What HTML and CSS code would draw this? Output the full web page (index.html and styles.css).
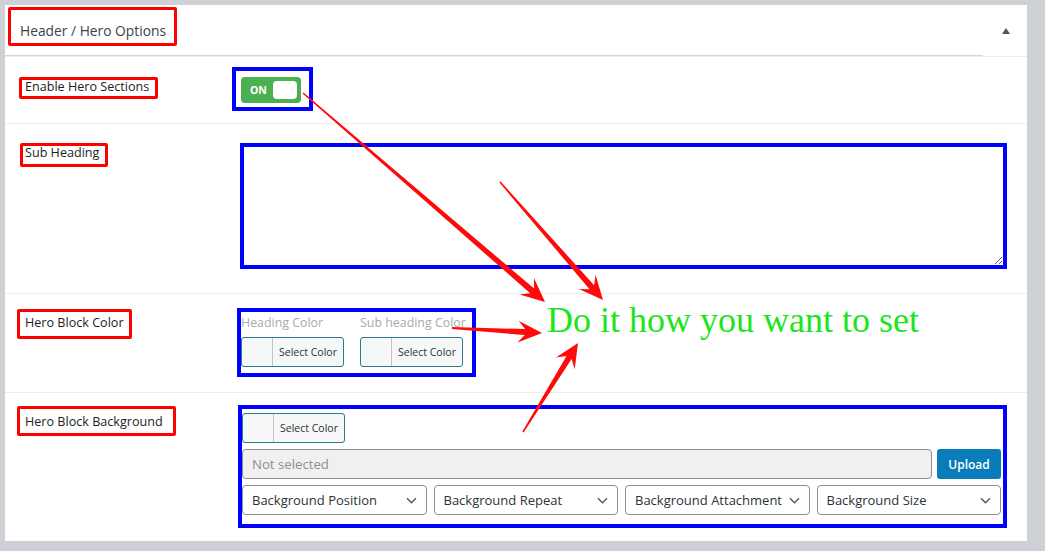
FILE: index.html
```html
<!DOCTYPE html>
<html lang="en">
<head>
    <meta charset="UTF-8">
    <meta name="viewport" content="width=device-width, initial-scale=1.0">
    <title>Header / Hero Options</title>
    <link rel="stylesheet" href="styles.css">
</head>
<body>
    <div class="panel">
        <div class="panel-top">
            <div class="panel-head">
                <h2 class="panel-title">Header / Hero Options</h2>
            </div>
            <div class="head-toggle"><span class="caret-up"></span></div>
        </div>

        <div class="row row-enable">
            <div class="row-label"><span class="mark">Enable Hero Sections</span></div>
            <div class="row-field">
                <div class="box">
                    <span class="switch">
                        <span class="switch-text">ON</span>
                        <span class="switch-knob"></span>
                    </span>
                </div>
            </div>
        </div>

        <div class="row row-sub">
            <div class="row-label"><span class="mark">Sub Heading</span></div>
            <div class="row-field">
                <textarea class="sub-text"></textarea>
            </div>
        </div>

        <div class="row row-color">
            <div class="row-label"><span class="mark">Hero Block Color</span></div>
            <div class="row-field">
                <div class="box">
                    <div class="color-list">
                        <div class="color-item">
                            <div class="color-label">Heading Color</div>
                            <button type="button" class="color-btn"><span class="swatch"></span><span class="color-txt">Select Color</span></button>
                        </div>
                        <div class="color-item">
                            <div class="color-label">Sub heading Color</div>
                            <button type="button" class="color-btn"><span class="swatch"></span><span class="color-txt">Select Color</span></button>
                        </div>
                    </div>
                </div>
            </div>
        </div>

        <div class="row row-bg">
            <div class="row-label"><span class="mark">Hero Block Background</span></div>
            <div class="row-field">
                <div class="box">
                    <button type="button" class="color-btn"><span class="swatch"></span><span class="color-txt">Select Color</span></button>
                    <div class="upload-line">
                        <div class="file-input">Not selected</div>
                        <button type="button" class="upload">Upload</button>
                    </div>
                    <div class="select-line">
                        <div class="select"><span>Background Position</span><svg width="11" height="7" viewBox="0 0 11 7"><path d="M1 1.2l4.5 4.5 4.5-4.5" fill="none" stroke="#50575e" stroke-width="1.4"/></svg></div>
                        <div class="select"><span>Background Repeat</span><svg width="11" height="7" viewBox="0 0 11 7"><path d="M1 1.2l4.5 4.5 4.5-4.5" fill="none" stroke="#50575e" stroke-width="1.4"/></svg></div>
                        <div class="select"><span>Background Attachment</span><svg width="11" height="7" viewBox="0 0 11 7"><path d="M1 1.2l4.5 4.5 4.5-4.5" fill="none" stroke="#50575e" stroke-width="1.4"/></svg></div>
                        <div class="select"><span>Background Size</span><svg width="11" height="7" viewBox="0 0 11 7"><path d="M1 1.2l4.5 4.5 4.5-4.5" fill="none" stroke="#50575e" stroke-width="1.4"/></svg></div>
                    </div>
                </div>
            </div>
        </div>
    </div>

    <!-- annotation arrows -->
    <svg class="arrows" width="1045" height="551" viewBox="0 0 1045 551">
        <polygon points="302.5,93.6 530.2,293.2 519.6,294.6 545,302 534.0,278.0 534.1,288.6 303.5,92.4"/>
        <polygon points="499.4,182.5 589.5,289.2 578.9,289.1 603,300 595.5,274.7 594.1,285.2 500.6,181.5"/>
        <polygon points="451.9,329.0 524.8,335.1 517.4,342.6 542,333 518.6,320.7 525.2,329.1 452.1,327.0"/>
        <polygon points="523.6,432.4 571.6,359.1 574.7,369.2 578,343 556.0,357.6 566.5,355.9 522.4,431.6"/>
    </svg>
    <div class="note">Do it how you want to set</div>
</body>
</html>
```

FILE: styles.css
```css
html,body{
    margin: 0;
    padding: 0;
    background-color: #cdd0d4;
}
body{
    padding: 5px 0 0 5px;
    font-family: "Open Sans", "Noto Sans", sans-serif;
    color: #1d2327;
}
.panel{
    width: 1022px;
    background-color: #fff;
}
.panel-top{
    display: flex;
}
.panel-head{
    flex: 1;
    height: 48px;
    padding: 2px 0 0 3px;
    border-bottom: 1px solid #d4d4d4;
}
.panel-title{
    display: inline-block;
    margin: 0;
    padding: 12px 8px 3px 9px;
    border: 3px solid #f00;
    border-radius: 2px;
    font-size: 13.8px;
    font-weight: 400;
    line-height: 18px;
    color: #3c434a;
}
.head-toggle{
    width: 44px;
    padding: 23px 0 0 19px;
    box-sizing: border-box;
}
.caret-up{
    display: block;
    width: 0;
    height: 0;
    border-left: 4px solid transparent;
    border-right: 4px solid transparent;
    border-bottom: 6px solid #555;
}
.row{
    display: flex;
    border-top: 1px solid #ececec;
}
.row-label{
    width: 215px;
    padding-left: 20px;
    font-size: 12.6px;
    color: #1a1e22;
}
.row-field{
    flex: 1;
}
.mark{
    display: inline-block;
    border: 3px solid #f00;
    border-radius: 2px;
    white-space: nowrap;
}
.box{
    border: 4px solid #00f;
}

/* enable */
.row-enable .row-label{
    padding-top: 20px;
}
.row-enable .mark{
    margin-left: -6px;
    padding: 0 6px 3px 3px;
    line-height: 13px;
}
.row-enable .row-field{
    padding: 10px 0 12px;
}
.row-enable .box{
    display: inline-block;
    margin-left: -8px;
    padding: 6px 8px 4px 5px;
}
.switch{
    display: flex;
    align-items: center;
    justify-content: space-between;
    width: 60px;
    height: 26px;
    box-sizing: border-box;
    padding: 0 4px 0 9px;
    border-radius: 4px;
    background-color: #4caf50;
}
.switch-text{
    font-size: 10.5px;
    font-weight: 700;
    color: #fff;
}
.switch-knob{
    width: 24px;
    height: 18px;
    border-radius: 4px;
    background-color: #fff;
}

/* sub heading */
.row-sub .row-label{
    padding-top: 19px;
}
.row-sub .mark{
    margin-left: -5px;
    padding: 0 6px 4px 2px;
    line-height: 14px;
}
.row-sub .row-field{
    padding: 19px 0 24px;
}
.sub-text{
    display: block;
    width: 767px;
    height: 126px;
    box-sizing: border-box;
    margin: 0;
    border: 4px solid #00f;
    border-radius: 0;
    outline: 0;
}

/* colors */
.row-color .row-label{
    padding-top: 15px;
}
.row-color .mark{
    margin-left: -8px;
    padding: 0 5px 3px 5px;
    line-height: 21px;
}
.row-color .row-field{
    padding: 14px 0 15px;
}
.row-color .box{
    display: inline-block;
    margin-left: -3px;
    padding: 2px 9px 6px 0;
}
.color-list{
    display: flex;
    gap: 16px;
}
.color-item{
    width: 103px;
}
.color-label{
    font-size: 12.4px;
    line-height: 17px;
    color: #a7aaad;
    white-space: nowrap;
    margin-bottom: 6px;
}
.color-btn{
    display: flex;
    width: 103px;
    height: 30px;
    padding: 0;
    border: 1px solid #2b7b8e;
    border-radius: 3px;
    background-color: #f6f7f7;
    overflow: hidden;
    font-family: inherit;
}
.swatch{
    width: 30px;
    height: 100%;
    border-right: 1px solid #c3c4c7;
}
.color-txt{
    flex: 1;
    font-size: 10.5px;
    line-height: 28px;
    color: #2c3338;
    text-align: center;
}

/* background */
.row-bg .row-label{
    padding-top: 13px;
}
.row-bg .mark{
    margin-left: -8px;
    padding: 1px 10px 0 5px;
    line-height: 23px;
}
.row-bg .row-field{
    padding: 12px 0 13px;
}
.row-bg .box{
    margin: 0 20px 0 -2px;
    padding: 4px 2px 9px 0;
}
.upload-line{
    display: flex;
    gap: 5px;
    margin: 6px 0;
}
.file-input{
    flex: 1;
    height: 30px;
    box-sizing: border-box;
    padding-left: 9px;
    border: 1px solid #8c8f94;
    border-radius: 4px;
    background-color: #f0f0f1;
    font-size: 13.2px;
    line-height: 28px;
    color: #8c8f94;
}
.upload{
    width: 64px;
    height: 30px;
    padding: 0;
    border: none;
    border-radius: 3px;
    background-color: #0a7cba;
    font-family: inherit;
    font-size: 12px;
    font-weight: 600;
    color: #fff;
}
.select-line{
    display: flex;
    gap: 7px;
}
.select{
    flex: 1;
    display: flex;
    align-items: center;
    justify-content: space-between;
    height: 30px;
    box-sizing: border-box;
    padding: 0 9px 0 9px;
    border: 1px solid #8c8f94;
    border-radius: 4px;
    font-size: 13px;
    color: #2c3338;
    white-space: nowrap;
}

/* annotations */
.arrows{
    position: absolute;
    top: 0;
    left: 0;
    fill: #ff0a0a;
    pointer-events: none;
}
.note{
    position: absolute;
    top: 302px;
    left: 547px;
    font-family: "Liberation Serif", serif;
    font-size: 36px;
    line-height: 36px;
    color: #1be61b;
    white-space: nowrap;
}
```
